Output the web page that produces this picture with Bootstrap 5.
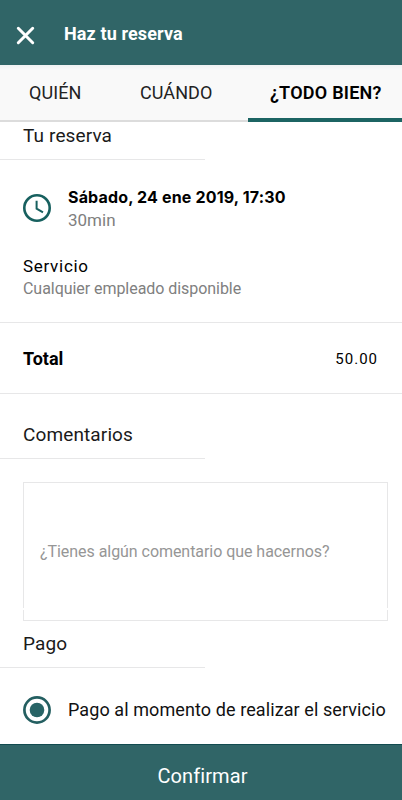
<!DOCTYPE html>
<html lang="es">
<head>
<meta charset="utf-8">
<meta name="viewport" content="width=device-width, initial-scale=1">
<title>Haz tu reserva</title>
<link href="https://cdn.jsdelivr.net/npm/bootstrap@5.3.0/dist/css/bootstrap.min.css" rel="stylesheet">
<style>
:root{--teal:#306567;--line:#e7e7e8}
body{font-family:Roboto,"Liberation Sans",sans-serif;color:#111;height:800px;overflow:hidden;background:#fff}
.t{line-height:24px;white-space:nowrap}
.topbar{height:65px;background:var(--teal);padding:3px 16px 0}
.close-x{width:19px;height:19px;margin-top:2px;background:none;border:0;padding:0}
.close-x svg{display:block}
.topbar h1{font-size:18px;font-weight:700;margin-left:29px;letter-spacing:.12px}
.tabs{height:57px;background:linear-gradient(#eff1f2,#f9f9f9 5px);border-bottom:2px solid #dcdcdc}
.tabs .nav-link{color:#222;font-size:18px;font-weight:400;padding:0;height:57px;line-height:56px;white-space:nowrap;border-radius:0;letter-spacing:.08px}
.tabs .tab-a{width:111px;padding-left:29px}
.tabs .tab-b{width:137px;padding-left:29px}
.tabs .tab-c{width:154px;padding-left:22px;font-weight:600;color:#000;border-bottom:4px solid #1c6463;letter-spacing:.24px}
.sec{font-size:19px;font-weight:400;padding-left:23px;width:205px;border-bottom:1px solid var(--line);color:#1a1a1a;letter-spacing:.12px}
.sec-first{height:38px;padding-top:2px}
.sec-notes{height:65px;padding-top:29px}
.sec-pay{height:47px;padding-top:11px}
.date-row{padding:25px 0 0 23px;height:94px}
.date-row svg{margin:9px 17px 0 0}
.when{font-family:Inter,"Open Sans",sans-serif;font-size:16px;font-weight:700;color:#000;letter-spacing:.16px}
.grey{color:#808080}
.minutes{font-size:17px;margin-top:-1px}
.service{height:68px;padding-left:23px}
.service-name{font-size:17px;letter-spacing:.7px}
.employee{font-size:16px;margin-top:-1px;letter-spacing:-.05px}
.total{height:72px;padding:24px 24px 0 23px;border-color:var(--line)!important}
.total strong{font-size:18px}
.price{font-size:15px;letter-spacing:1px}
.notes{width:365px;height:139px;margin:23px 0 0 23px;border:1px solid var(--line);padding-left:16px;font-size:16px;color:#969696;letter-spacing:-.05px;position:relative}
.notes::after{content:"";position:absolute;left:-1px;right:-1px;bottom:10px;height:2px;background:#fff}
.pay{padding:28px 0 0 23px;height:76px;gap:17px;font-size:18px}
.pay .t{margin-top:2px;letter-spacing:.09px}
.confirm{height:56px;background:var(--teal)!important;border:0;border-top:1px solid #124b50;font-size:20px;color:#fff!important;border-radius:0;line-height:24px;padding:6px 0 0 3px;font-weight:450;letter-spacing:.1px}
</style>
<script src="https://cdn.jsdelivr.net/npm/bootstrap@5.3.0/dist/js/bootstrap.bundle.min.js"></script>
</head>
<body class="d-flex flex-column">
<header class="topbar d-flex align-items-center flex-shrink-0">
  <button class="close-x" type="button" aria-label="Cerrar"><svg width="19" height="19" viewBox="0 0 19 19"><path d="M2.3 2.3 16.7 16.7M16.7 2.3 2.3 16.7" stroke="#fff" stroke-width="3" stroke-linecap="round"/></svg></button>
  <h1 class="text-white mb-0 t">Haz tu reserva</h1>
</header>
<nav class="tabs nav flex-nowrap flex-shrink-0">
  <a class="nav-link tab-a">QUIÉN</a>
  <a class="nav-link tab-b">CUÁNDO</a>
  <a class="nav-link tab-c active">¿TODO BIEN?</a>
</nav>
<main class="flex-grow-1">
  <h2 class="sec sec-first t mb-0">Tu reserva</h2>
  <section class="date-row d-flex align-items-start">
    <svg class="flex-shrink-0" width="28" height="28" viewBox="0 0 28 28" fill="none" stroke="#17605f"><circle cx="14" cy="14" r="12.7" stroke-width="2.6"/><path d="M13.6 6.7V14.6L20 18.4" stroke-width="2"/></svg>
    <div>
      <div class="when t">Sábado, 24 ene 2019, 17:30</div>
      <div class="grey minutes t">30min</div>
    </div>
  </section>
  <section class="service">
    <div class="service-name t text-black">Servicio</div>
    <div class="employee t grey">Cualquier empleado disponible</div>
  </section>
  <section class="total d-flex justify-content-between border-top border-bottom">
    <strong class="t text-black">Total</strong>
    <span class="price t text-black">50.00</span>
  </section>
  <h2 class="sec sec-notes t mb-0">Comentarios</h2>
  <div class="notes d-flex align-items-center"><span class="t">¿Tienes algún comentario que hacernos?</span></div>
  <h2 class="sec sec-pay t mb-0">Pago</h2>
  <div class="pay d-flex align-items-start">
    <svg class="flex-shrink-0" width="28" height="28" viewBox="0 0 28 28"><circle cx="14" cy="14" r="12.6" fill="none" stroke="#245f61" stroke-width="2.7"/><circle cx="14" cy="14" r="7.3" fill="#286466"/></svg>
    <span class="t">Pago al momento de realizar el servicio</span>
  </div>
</main>
<button class="btn confirm w-100 flex-shrink-0">Confirmar</button>
</body>
</html>
